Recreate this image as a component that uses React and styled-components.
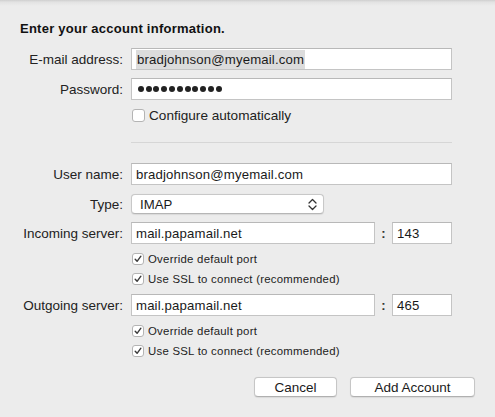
import styled, { createGlobalStyle } from "styled-components";

const Global = createGlobalStyle`
  html, body {
    margin: 0;
    padding: 0;
    background: #ececec;
  }
  body {
    font-family: "Liberation Sans", Arial, sans-serif;
    color: #1d1d1d;
    -webkit-font-smoothing: antialiased;
  }
`;

function Check({ checked }) {
    return (
        <Box $checked={checked}>
            {checked && (
                <svg width="8" height="8" viewBox="0 0 8 8">
                    <path d="M1.2 4.3 L3.1 6.3 L6.9 1.2" fill="none" stroke="#3a3a3a" strokeWidth="1.4" strokeLinecap="round" strokeLinejoin="round" />
                </svg>
            )}
        </Box>
    );
}

function App() {
    return (
        <>
            <Global />
            <Sheet>
                <Heading>Enter your account information.</Heading>

                <Row>
                    <Label>E-mail address:</Label>
                    <Field><Selected>bradjohnson@myemail.com</Selected></Field>
                </Row>
                <Row $top={8}>
                    <Label>Password:</Label>
                    <Field>
                        {Array.from({ length: 11 }).map((_, i) => <Dot key={i} />)}
                    </Field>
                </Row>
                <CheckRow $top={8}>
                    <BigBox />
                    <span>Configure automatically</span>
                </CheckRow>

                <Divider />

                <Row $top={20}>
                    <Label>User name:</Label>
                    <Field>bradjohnson@myemail.com</Field>
                </Row>
                <Row $top={9}>
                    <Label>Type:</Label>
                    <Select>
                        IMAP
                        <svg width="9" height="13" viewBox="0 0 9 13">
                            <path d="M1 5 L4.5 1.5 L8 5 M1 8 L4.5 11.5 L8 8" fill="none" stroke="#333" strokeWidth="1.3" strokeLinecap="round" strokeLinejoin="round" />
                        </svg>
                    </Select>
                </Row>

                <Row $top={8}>
                    <Label>Incoming server:</Label>
                    <ServerLine>
                        <Field $width={244}>mail.papamail.net</Field>
                        <Colon>:</Colon>
                        <Field $width={60}>143</Field>
                    </ServerLine>
                </Row>
                <SmallCheck $top={8}>
                    <Check checked />
                    <span>Override default port</span>
                </SmallCheck>
                <SmallCheck $top={6}>
                    <Check checked />
                    <span>Use SSL to connect (recommended)</span>
                </SmallCheck>

                <Row $top={8}>
                    <Label>Outgoing server:</Label>
                    <ServerLine>
                        <Field $width={244}>mail.papamail.net</Field>
                        <Colon>:</Colon>
                        <Field $width={60}>465</Field>
                    </ServerLine>
                </Row>
                <SmallCheck $top={8}>
                    <Check checked />
                    <span>Override default port</span>
                </SmallCheck>
                <SmallCheck $top={6}>
                    <Check checked />
                    <span>Use SSL to connect (recommended)</span>
                </SmallCheck>

                <Buttons>
                    <Button $width={83}>Cancel</Button>
                    <Button $width={125}>Add Account</Button>
                </Buttons>
            </Sheet>
        </>
    );
}

export default App;

const Sheet = styled.div`
  width: 495px;
  height: 417px;
  box-sizing: border-box;
  padding: 21px 0 0 0;
  background: linear-gradient(#cfcfcf 0px, #e2e2e2 2px, #ececec 6px, #ececec 100%);
  overflow: hidden;
`;

const Heading = styled.div`
  margin-left: 20px;
  font-size: 13px;
  font-weight: bold;
  line-height: 16px;
  letter-spacing: 0.25px;
  color: #111;
  margin-bottom: 11px;
`;

const Row = styled.div`
  display: flex;
  align-items: center;
  gap: 8px;
  margin-top: ${(p) => p.$top || 0}px;
`;

const Label = styled.div`
  width: 123px;
  text-align: right;
  font-size: 13.5px;
  color: #222;
`;

const Field = styled.div`
  width: ${(p) => p.$width || 321}px;
  height: 22px;
  box-sizing: border-box;
  border: 1px solid #c4c4c4;
  border-top-color: #b8b8b8;
  background: #fff;
  display: flex;
  align-items: center;
  padding-left: 4px;
  font-size: 13.2px;
  letter-spacing: 0.15px;
  color: #1a1a1a;
`;

const Selected = styled.span`
  background: #dcdcdc;
  padding: 2px 1px;
`;

const Dot = styled.span`
  width: 6px;
  height: 6px;
  border-radius: 50%;
  background: #222;
  margin-left: 1.8px;
  flex-shrink: 0;
`;

const CheckRow = styled.div`
  display: flex;
  align-items: center;
  gap: 4px;
  margin-left: 132px;
  margin-top: ${(p) => p.$top || 0}px;
  font-size: 13.6px;
  height: 14px;
  color: #222;
`;

const BigBox = styled.span`
  width: 13px;
  height: 13px;
  box-sizing: border-box;
  border: 1px solid #b4b4b4;
  border-radius: 3px;
  background: #fff;
`;

const Divider = styled.div`
  margin: 20px 0 0 131px;
  width: 321px;
  height: 1px;
  background: #d6d6d6;
`;

const Select = styled.div`
  width: 193px;
  height: 20px;
  box-sizing: border-box;
  border: 1px solid #c8c8c8;
  border-bottom-color: #b6b6b6;
  border-radius: 4px;
  background: #fff;
  box-shadow: 0 0.5px 1px rgba(0, 0, 0, 0.08);
  display: flex;
  align-items: center;
  justify-content: space-between;
  padding: 0 6px 0 8px;
  font-size: 13.2px;
  color: #1a1a1a;
`;

const ServerLine = styled.div`
  display: flex;
  align-items: center;
`;

const Colon = styled.span`
  width: 17px;
  text-align: center;
  font-size: 13px;
  font-weight: bold;
  color: #333;
`;

const SmallCheck = styled.div`
  display: flex;
  align-items: center;
  gap: 4px;
  height: 14px;
  margin-left: 132px;
  margin-top: ${(p) => p.$top || 0}px;
  font-size: 11.4px;
  letter-spacing: 0.25px;
  color: #222;
`;

const Box = styled.span`
  width: 12px;
  height: 12px;
  box-sizing: border-box;
  border: 1px solid #b4b4b4;
  border-radius: 3px;
  background: #fff;
  display: flex;
  align-items: center;
  justify-content: center;
`;

const Buttons = styled.div`
  display: flex;
  gap: 13px;
  margin: 19px 0 0 254px;
`;

const Button = styled.button`
  width: ${(p) => p.$width}px;
  height: 20px;
  box-sizing: border-box;
  border: 1px solid #c6c6c6;
  border-bottom-color: #b0b0b0;
  border-radius: 4px;
  background: #fff;
  box-shadow: 0 0.5px 1px rgba(0, 0, 0, 0.08);
  font-family: "Liberation Sans", Arial, sans-serif;
  font-size: 13.5px;
  color: #1a1a1a;
  padding: 0;
  cursor: pointer;
`;
